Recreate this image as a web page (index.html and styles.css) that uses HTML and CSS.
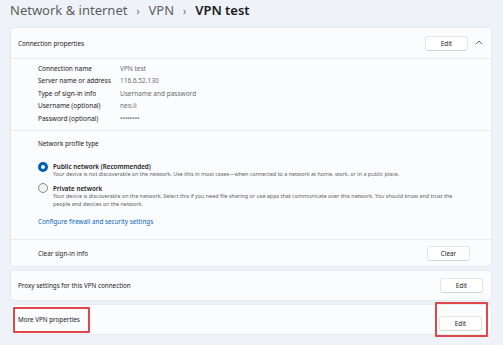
FILE: index.html
```html
<!DOCTYPE html>
<html lang="en">
<head>
  <meta charset="UTF-8">
  <meta name="viewport" content="width=device-width, initial-scale=1.0">
  <title>VPN test - Settings</title>
  <link rel="stylesheet" href="styles.css">
</head>
<body>
  <div class="page">
    <h1 class="breadcrumb">
      <span class="crumb">Network &amp; internet</span>
      <span class="sep">›</span>
      <span class="crumb">VPN</span>
      <span class="sep">›</span>
      <span class="crumb current">VPN test</span>
    </h1>

    <div class="card expander">
      <div class="card-row header">
        <span class="row-title">Connection properties</span>
        <div class="row-actions">
          <button class="button">Edit</button>
          <svg class="chevron" width="8" height="5" viewBox="0 0 8 5"><path d="M0.8 4.2 L4 1 L7.2 4.2" fill="none" stroke="#555" stroke-width="0.9"/></svg>
        </div>
      </div>

      <div class="section details">
        <div class="detail"><span class="label">Connection name</span><span class="value">VPN test</span></div>
        <div class="detail"><span class="label">Server name or address</span><span class="value">116.6.52.130</span></div>
        <div class="detail"><span class="label">Type of sign-in info</span><span class="value">Username and password</span></div>
        <div class="detail"><span class="label">Username (optional)</span><span class="value">neo.li</span></div>
        <div class="detail"><span class="label">Password (optional)</span><span class="value">••••••••</span></div>
      </div>

      <div class="section profile">
        <div class="section-title">Network profile type</div>
        <div class="radio-group">
          <div class="radio checked">
            <span class="dot"></span>
            <div>
              <div class="radio-label">Public network (Recommended)</div>
              <div class="radio-desc">Your device is not discoverable on the network. Use this in most cases—when connected to a network at home, work, or in a public place.</div>
            </div>
          </div>
          <div class="radio">
            <span class="dot"></span>
            <div>
              <div class="radio-label">Private network</div>
              <div class="radio-desc">Your device is discoverable on the network. Select this if you need file sharing or use apps that communicate over this network. You should know and trust the people and devices on the network.</div>
            </div>
          </div>
        </div>
        <a href="#" class="link">Configure firewall and security settings</a>
      </div>

      <div class="section clear-row">
        <span class="row-title">Clear sign-in info</span>
        <button class="button">Clear</button>
      </div>
    </div>

    <div class="card card-row">
      <span class="row-title">Proxy settings for this VPN connection</span>
      <button class="button">Edit</button>
    </div>

    <div class="card card-row more">
      <span class="row-title highlight">More VPN properties</span>
      <div class="highlight-box"><button class="button">Edit</button></div>
    </div>
  </div>
</body>
</html>
```

FILE: styles.css
```css
* {
  box-sizing: border-box;
  margin: 0;
  padding: 0;
}

body {
  font-family: "Noto Sans", "Open Sans", sans-serif;
  background-color: #eff3f9;
  color: #1b1b1b;
  width: 503px;
  height: 345px;
  overflow: hidden;
}

.page {
  padding: 0 11px 0 10px;
  display: flex;
  flex-direction: column;
}

.breadcrumb {
  font-size: 13px;
  font-weight: 400;
  height: 27px;
  display: flex;
  align-items: center;
  gap: 9px;
  color: #5d5d5d;
  line-height: 1;
  padding-bottom: 6px;
}

.breadcrumb .sep {
  font-size: 10px;
  color: #6a6a6a;
}

.breadcrumb .current {
  color: #1b1b1b;
  font-weight: 600;
}

.card {
  background-color: #fbfcfe;
  border: 1px solid #e7eaef;
  border-radius: 4px;
  margin-bottom: 3px;
}

.card-row {
  display: flex;
  align-items: center;
  justify-content: space-between;
  height: 31px;
  padding: 0 8px 0 7px;
}

.row-title {
  font-size: 6.3px;
  color: #1b1b1b;
}

.row-actions {
  display: flex;
  align-items: center;
  gap: 7px;
}

.expander .header {
  height: 31px;
  padding-right: 8px;
  border-bottom: 1px solid #ebebeb;
}

.chevron {
  display: block;
  margin-top: -1px;
}

.button {
  font-family: inherit;
  font-size: 6.3px;
  color: #1b1b1b;
  background-color: #ffffff;
  border: 1px solid #e5e5e5;
  border-bottom-color: #d6d6d6;
  border-radius: 3px;
  width: 43px;
  height: 15px;
}

.section {
  background-color: #fbfcfe;
  border-bottom: 1px solid #ebebeb;
  padding-left: 27px;
}

.details {
  padding-top: 3px;
  height: 72px;
}

.detail {
  display: flex;
  height: 12.5px;
  align-items: center;
  font-size: 6.5px;
}

.detail .label {
  width: 82px;
  color: #1b1b1b;
}

.detail .value {
  color: #6b6b6b;
}

.profile {
  height: 109px;
  padding-top: 8px;
}

.section-title {
  font-size: 6.3px;
  line-height: 9px;
  margin-bottom: 14px;
}

.radio-group {
  display: flex;
  flex-direction: column;
  gap: 5px;
  margin-bottom: 9px;
}

.radio {
  display: flex;
  gap: 5px;
  align-items: flex-start;
}

.radio .dot {
  width: 10px;
  height: 10px;
  border-radius: 50%;
  border: 1px solid #8a8a8a;
  background-color: #f3f3f3;
  flex-shrink: 0;
  margin-top: -0.5px;
}

.radio.checked .dot {
  border: 3px solid #005fb8;
  background-color: #ffffff;
}

.radio-label {
  font-size: 6.3px;
  font-weight: 600;
  line-height: 9px;
}

.radio-desc {
  font-size: 5.4px;
  color: #5f5f5f;
  line-height: 7.8px;
  max-width: 415px;
}

.link {
  display: block;
  font-size: 6.3px;
  line-height: 9px;
  color: #0a63b8;
  text-decoration: none;
}

.clear-row {
  display: flex;
  align-items: center;
  justify-content: space-between;
  height: 26px;
  padding-right: 21px;
  border-bottom: none;
  border-radius: 0 0 4px 4px;
}

.more {
  padding-left: 2px;
  padding-right: 3px;
}

.highlight {
  display: inline-flex;
  align-items: center;
  height: 26px;
  border: 2px solid #e0474c;
  padding: 0 8px 0 3px;
  border-radius: 1px;
}

.highlight-box {
  border: 2px solid #e0474c;
  padding: 5px 4px 4px 2px;
  border-radius: 1px;
}
```
